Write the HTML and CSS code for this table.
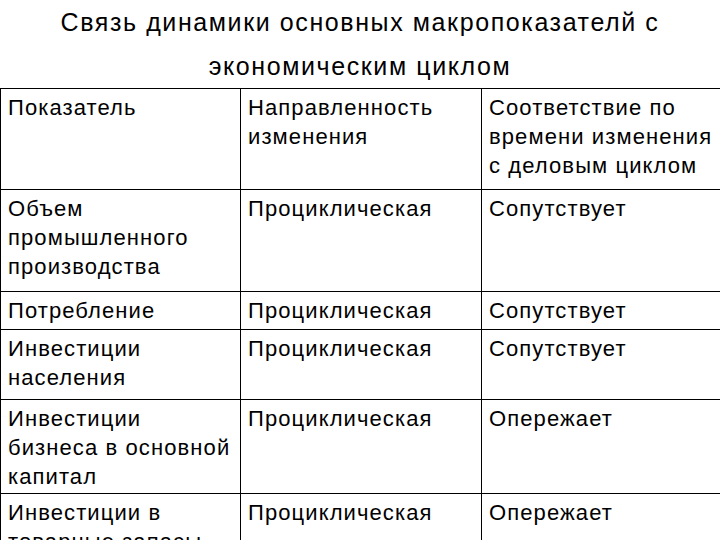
FILE: index.html
```html
<!DOCTYPE html>
<html lang="ru">
<head>
<meta charset="utf-8">
<link rel="stylesheet" href="styles.css">
</head>
<body>
<div class="page">
  <h1 class="title">Связь динамики основных макропоказателй с<br>экономическим циклом</h1>
  <table class="grid">
    <colgroup>
      <col class="c1"><col class="c2"><col class="c3">
    </colgroup>
    <tr class="r-head">
      <td>Показатель</td>
      <td>Направленность изменения</td>
      <td>Соответствие по времени изменения с деловым циклом</td>
    </tr>
    <tr class="r-1">
      <td>Объем промышленного производства</td>
      <td>Проциклическая</td>
      <td>Сопутствует</td>
    </tr>
    <tr class="r-2">
      <td>Потребление</td>
      <td>Проциклическая</td>
      <td>Сопутствует</td>
    </tr>
    <tr class="r-3">
      <td>Инвестиции населения</td>
      <td>Проциклическая</td>
      <td>Сопутствует</td>
    </tr>
    <tr class="r-4">
      <td>Инвестиции бизнеса в основной капитал</td>
      <td>Проциклическая</td>
      <td>Опережает</td>
    </tr>
    <tr class="r-5">
      <td>Инвестиции в товарные запасы</td>
      <td>Проциклическая</td>
      <td>Опережает</td>
    </tr>
  </table>
</div>
</body>
</html>
```

FILE: styles.css
```css
html, body {
  margin: 0;
  padding: 0;
  background: #ffffff;
}
body {
  width: 720px;
  height: 540px;
  overflow: hidden;
  font-family: "Liberation Sans", Arial, sans-serif;
  color: #000;
}
.page {
  width: 720px;
}
.title {
  margin: 0;
  height: 88px;
  font-size: 25px;
  font-weight: normal;
  letter-spacing: 1.6px;
  line-height: 44px;
  text-align: center;
}
.grid {
  width: 720px;
  border-collapse: collapse;
  table-layout: fixed;
  font-size: 22px;
  letter-spacing: 1.1px;
  line-height: 29px;
}
.c1 { width: 240px; }
.c2 { width: 241px; }
.c3 { width: 239px; }
.grid td {
  border: 1px solid #000;
  vertical-align: top;
  padding: 4px 2px 0 7px;
  box-sizing: border-box;
}
.r-head td { height: 101px; }
.r-1 td { height: 102px; }
.r-2 td { height: 38px; }
.r-3 td { height: 70px; }
.r-4 td { height: 94px; }
.r-5 td { height: 80px; }
```
